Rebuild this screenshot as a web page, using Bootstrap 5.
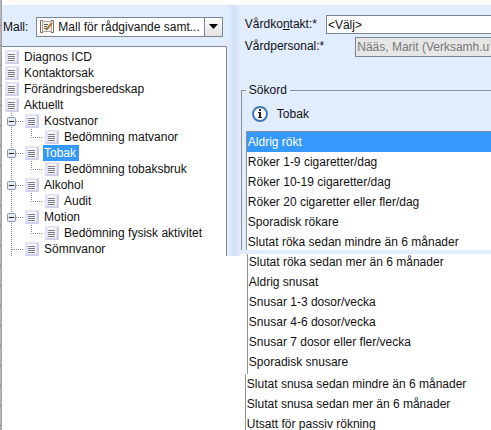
<!DOCTYPE html>
<html lang="sv">
<head>
<meta charset="utf-8">
<meta name="viewport" content="width=device-width, initial-scale=1">
<title>Sökord</title>
<link href="https://cdn.jsdelivr.net/npm/bootstrap@5.3.0/dist/css/bootstrap.min.css" rel="stylesheet">
<style>
  body { font: 12px/16px "Liberation Sans", Arial, sans-serif; color: #111; background: #fff; }
  .app { min-height: 100vh; overflow: hidden; }
  .ruler { flex: 0 0 2px; background: repeating-linear-gradient(#b5b5b8 0 19px, #77777a 19px 20px); border-right: 1px solid #a3a3a6; background-position: 0 6px; }
  .side { flex: 0 0 46%; min-width: 0; }
  .blue { background: #e1ecfd; }
  .bar { height: 41px; padding: 2px 5px 0 1px; }
  .combo { height: 20px; border: 1px solid #7b8694; background: #fff; min-width: 0; }
  .combo select { appearance: none; border: 0; background: transparent; padding: 0; min-width: 0; color: #111; text-overflow: ellipsis; }
  .combo > svg { margin: 0 4px 0 3px; }
  .arrow { width: 18px; border: 0; border-left: 1px solid #7b8694; background: linear-gradient(#fdfdfd, #e2e2e2); padding: 0; }
  .tree { border: 1px solid #7f8c9e; border-width: 1px 1px 0 0; background: #fff; padding: 2px 0 0 1px; margin-right: 1px; }
  .tree li { height: 16px; }
  .cell { flex: 0 0 20px; height: 16px; padding: 0; border: 0; background: none; }
  .cell svg, .combo svg, .info svg { display: block; }
  .label { padding: 0 1px; white-space: nowrap; }
  .picked { background: #3598fb; color: #fff; padding-right: 3px; }
  .split { flex: 0 0 12px; background: linear-gradient(90deg, #e1ecfd, #d3e2f8 50%, #dae7fa 80%, #e1ecfd); }
  .main { min-width: 0; }
  .upper { margin-top: 5px; height: 251px; }
  .side .upper { overflow: hidden; }
  .main .upper { height: 249px; padding: 10px 0 0 1px; }
  .field { height: 20px; margin-bottom: 2px; padding-left: 4px; }
  .field label { padding-top: 1px; }
  .field select, .field input { min-width: 0; appearance: none; border: 1px solid #7b8694; border-right: 0; border-radius: 0; padding: 0 1px; color: #111; background: #fff; }
  .field select { height: 19px; margin-left: 9px; }
  .field input { height: 20px; margin-left: 31px; color: #777; background: #e6e6e6; }
  fieldset { border: 1px solid #8c8f96; border-width: 1px 0 0 1px; margin-top: 25px; }
  legend { font-size: 12px; line-height: 16px; padding: 0 3px; margin: 0 0 0 4px; }
  .info { padding: 8px 0 9px 10px; gap: 9px; }
  .opts { border-left: 1px solid #8592a4; background: #fff; margin-left: 4px; }
  .opts .list-group-item { border: 0; padding: 2px 1px; color: #111; line-height: 16px; background: transparent; white-space: nowrap; }
  .opts .list-group-item.active { background: #3598fb; color: #fff; margin: 0; }
  .first { border-top: 1px solid #8592a4; }
  .first .list-group-item:last-child { height: 18px; }
  .second { margin-left: 7px; padding-bottom: 2px; }
  .second .list-group-item:first-child { padding-top: 0; }
  .third { margin-left: 5px; }
</style>
<script src="https://cdn.jsdelivr.net/npm/bootstrap@5.3.0/dist/js/bootstrap.bundle.min.js"></script>
</head>
<body>
<svg class="d-none" aria-hidden="true">
  <symbol id="doc" viewBox="-1 0 20 16"><path fill="#e4e3f6" d="M1 1h14v14H1z"/><path fill="#cfcfec" d="M13 2h2v13H2v-2h11z"/><path fill="#fbfbfe" d="M4 3h8v10H4z"/><path stroke="#77778c" d="M4 5.500h7M4 7.500h7M4 9.500h7M4 11.500h7"/></symbol>
  <symbol id="line" viewBox="-1 0 20 16"><path stroke="#888" stroke-dasharray="1 1" d="M7.500 0v16"/></symbol>
  <symbol id="elbow" viewBox="-1 0 20 16"><path fill="none" stroke="#888" stroke-dasharray="1 1" d="M7.500 0v8.500H20"/></symbol>
  <symbol id="tee" viewBox="-1 0 20 16"><path fill="none" stroke="#888" stroke-dasharray="1 1" d="M7.500 0v16M8 8.500h12"/></symbol>
  <symbol id="minus" viewBox="-1 0 20 16"><path fill="none" stroke="#888" stroke-dasharray="1 1" d="M7.500 0v16M12 8.500h8"/><rect x="3.500" y="4.500" width="8" height="8" rx="1" fill="#e6ebf2" stroke="#8796a8"/><path stroke="#222" d="M5 8.500h5"/></symbol>
</svg>
<div class="app d-flex">
  <div class="ruler"></div>
  <aside class="side">
    <div class="upper blue">
      <div class="bar d-flex align-items-center">
        <label for="mall" class="me-2">Mall:</label>
        <div class="combo d-flex flex-grow-1">
          <svg class="flex-shrink-0" width="14" height="18" viewBox="0 0 14 18" aria-hidden="true"><path fill="none" stroke="#8a6a55" d="M3 2.500H.5v12H3M11 2.500h2.500v12H11"/><path fill="#f4f1e6" stroke="#a5a5a2" d="M2.500 3.500h9v10h-9z"/><path stroke="#555" d="M4 6.500h4M4 8.500h3M4 10.500h4"/><path stroke="#b77a34" stroke-width="2" d="M7 11l5-6"/><path stroke="#444" d="M6 12l1.500-1"/></svg>
          <select id="mall" class="flex-grow-1"><option>Mall för rådgivande samt...</option></select>
          <button class="arrow d-flex align-items-center justify-content-center" type="button" aria-label="Visa mallar"><svg width="9" height="5" viewBox="0 0 9 5"><path d="M0 0h9L4.500 5z"/></svg></button>
        </div>
      </div>
      <ul class="tree list-unstyled mb-0">
        <li class="d-flex"><svg class="cell"><use href="#doc"/></svg><span class="label">Diagnos ICD</span></li>
        <li class="d-flex"><svg class="cell"><use href="#doc"/></svg><span class="label">Kontaktorsak</span></li>
        <li class="d-flex"><svg class="cell"><use href="#doc"/></svg><span class="label">Förändringsberedskap</span></li>
        <li class="d-flex"><svg class="cell"><use href="#doc"/></svg><span class="label">Aktuellt</span></li>
        <li class="d-flex"><button class="cell" aria-label="Fäll ihop Kostvanor"><svg width="20" height="16"><use href="#minus"/></svg></button><svg class="cell"><use href="#doc"/></svg><span class="label">Kostvanor</span></li>
        <li class="d-flex"><svg class="cell"><use href="#line"/></svg><svg class="cell"><use href="#elbow"/></svg><svg class="cell"><use href="#doc"/></svg><span class="label">Bedömning matvanor</span></li>
        <li class="d-flex"><button class="cell" aria-label="Fäll ihop Tobak"><svg width="20" height="16"><use href="#minus"/></svg></button><svg class="cell"><use href="#doc"/></svg><span class="label picked">Tobak</span></li>
        <li class="d-flex"><svg class="cell"><use href="#line"/></svg><svg class="cell"><use href="#elbow"/></svg><svg class="cell"><use href="#doc"/></svg><span class="label">Bedömning tobaksbruk</span></li>
        <li class="d-flex"><button class="cell" aria-label="Fäll ihop Alkohol"><svg width="20" height="16"><use href="#minus"/></svg></button><svg class="cell"><use href="#doc"/></svg><span class="label">Alkohol</span></li>
        <li class="d-flex"><svg class="cell"><use href="#line"/></svg><svg class="cell"><use href="#elbow"/></svg><svg class="cell"><use href="#doc"/></svg><span class="label">Audit</span></li>
        <li class="d-flex"><button class="cell" aria-label="Fäll ihop Motion"><svg width="20" height="16"><use href="#minus"/></svg></button><svg class="cell"><use href="#doc"/></svg><span class="label">Motion</span></li>
        <li class="d-flex"><svg class="cell"><use href="#line"/></svg><svg class="cell"><use href="#elbow"/></svg><svg class="cell"><use href="#doc"/></svg><span class="label">Bedömning fysisk aktivitet</span></li>
        <li class="d-flex"><svg class="cell"><use href="#tee"/></svg><svg class="cell"><use href="#doc"/></svg><span class="label">Sömnvanor</span></li>
      </ul>
    </div>
  </aside>
  <div class="split upper"></div>
  <main class="main flex-grow-1">
    <div class="upper blue">
      <div class="field d-flex"><label for="kontakt">Vårdko<u>n</u>takt:*</label><select id="kontakt" class="flex-grow-1"><option>&lt;Välj&gt;</option></select></div>
      <div class="field d-flex"><label for="personal">Vårdpersonal:*</label><input id="personal" class="flex-grow-1" disabled value="Nääs, Marit (Verksamh.utv)"></div>
      <fieldset>
        <legend class="float-none w-auto">Sökord</legend>
        <div class="info d-flex align-items-center"><svg width="16" height="16" viewBox="0 0 16 16" aria-hidden="true"><circle cx="8" cy="8" r="7" fill="#fff" stroke="#3f79b8" stroke-width="2"/><path fill="#222" d="M7 3h2v2H7zM6 6h3v5h1v1H6v-1h1V7H6z"/></svg><span>Tobak</span></div>
        <ul class="opts first list-group rounded-0">
          <li class="list-group-item active">Aldrig rökt</li>
          <li class="list-group-item">Röker 1-9 cigaretter/dag</li>
          <li class="list-group-item">Röker 10-19 cigaretter/dag</li>
          <li class="list-group-item">Röker 20 cigaretter eller fler/dag</li>
          <li class="list-group-item">Sporadisk rökare</li>
          <li class="list-group-item">Slutat röka sedan mindre än 6 månader</li>
        </ul>
      </fieldset>
    </div>
    <ul class="opts second list-group rounded-0">
      <li class="list-group-item">Slutat röka sedan mer än 6 månader</li>
      <li class="list-group-item">Aldrig snusat</li>
      <li class="list-group-item">Snusar 1-3 dosor/vecka</li>
      <li class="list-group-item">Snusar 4-6 dosor/vecka</li>
      <li class="list-group-item">Snusar 7 dosor eller fler/vecka</li>
      <li class="list-group-item">Sporadisk snusare</li>
    </ul>
    <ul class="opts third list-group rounded-0">
      <li class="list-group-item">Slutat snusa sedan mindre än 6 månader</li>
      <li class="list-group-item">Slutat snusa sedan mer än 6 månader</li>
      <li class="list-group-item">Utsatt för passiv rökning</li>
    </ul>
  </main>
</div>
</body>
</html>
